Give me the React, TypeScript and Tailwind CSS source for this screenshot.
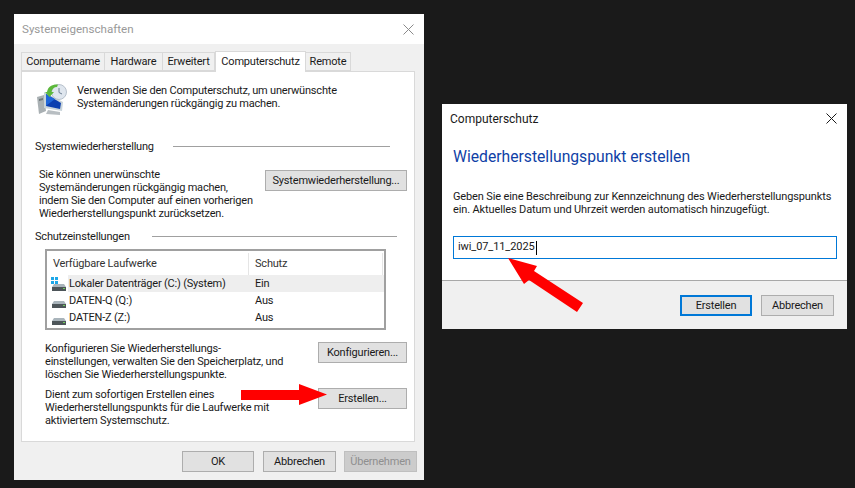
import React from "react";

const font = { fontFamily: "Roboto, 'Noto Sans', sans-serif" };

const Btn = ({ children, className = "" }: { children: React.ReactNode; className?: string }) => (
  <div
    className={`h-[21px] flex items-center justify-center border border-[#adadad] bg-[#e1e1e1] text-[11px] tracking-[-0.2px] leading-none text-[#1a1a1a] ${className}`}
  >
    {children}
  </div>
);

const Tab = ({ label, width, active }: { label: string; width: string; active?: boolean }) =>
  active ? (
    <div className={`${width} h-[21px] -mb-px z-10 pt-px flex items-center justify-center bg-white border border-b-0 border-[#d9d9d9] text-[11px] tracking-[-0.2px] text-[#1a1a1a]`}>
      {label}
    </div>
  ) : (
    <div className={`${width} h-[19px] pt-[2px] flex items-center justify-center bg-[#f0f0f0] border border-[#d9d9d9] border-l-0 first:border-l text-[11px] tracking-[-0.2px] text-[#1a1a1a]`}>
      {label}
    </div>
  );

const CloseIcon = ({ color }: { color: string }) => (
  <svg width="11" height="11" viewBox="0 0 11 11" fill="none" stroke={color} strokeWidth="1">
    <path d="M0.5 0.5 L10.5 10.5 M10.5 0.5 L0.5 10.5" />
  </svg>
);

const RestoreIcon = () => (
  <svg width="31" height="31" viewBox="0 0 31 31">
    <path d="M1 13 L8 11 L10 27 L3 30 Z" fill="#a9b0b3" />
    <path d="M3 15 L7 14 L7 16 L3 17 Z" fill="#6f777a" />
    <path d="M8 8 L27 18 L26 27 L8 24 Z" fill="#c9d4da" />
    <path d="M10 10 L25 19 L24 25 L10 22 Z" fill="#0b3fb0" />
    <path d="M10 10 L19 15 L11 21 L10 22 Z" fill="#1f66d8" />
    <path d="M12 26 L24 28 L24 31 L10 30 Z" fill="#b8bec2" />
    <circle cx="23" cy="8" r="7.5" fill="#dfe6ee" stroke="#a8b4c0" strokeWidth="0.8" />
    <path d="M23 4 V8.5 L26 10" fill="none" stroke="#6d7f92" strokeWidth="1" />
    <path d="M11 8 C12 2 17 0 22 0.5 L21 3 C18 3 16 5 15.5 8 L18 8 L13.5 13 L9 8 Z" fill="#5cb83c" />
  </svg>
);

const DriveIcon = ({ system }: { system?: boolean }) => (
  <svg width="16" height="14" viewBox="0 0 16 14">
    {system && (
      <g fill="#1ea7e8">
        <rect x="0" y="0" width="3" height="3" />
        <rect x="4" y="0" width="3" height="3" />
        <rect x="0" y="4" width="3" height="3" />
        <rect x="4" y="4" width="3" height="3" />
      </g>
    )}
    <path d="M3 7 H13 L15 10 H1 Z" fill="#a9b4bb" />
    <rect x="1" y="10" width="14" height="4" fill="#4d5559" />
    <rect x="12" y="11" width="2" height="1" fill="#6fd05a" />
  </svg>
);

const SectionHead = ({ label, labelWidth, lineRight }: { label: string; labelWidth: string; lineRight: string }) => (
  <div className="flex items-center pl-[13px] h-[13px]">
    <div className={`${labelWidth} text-[11px] tracking-[-0.2px] leading-[13px] text-[#1a1a1a]`}>{label}</div>
    <div className={`flex-1 h-px bg-[#a0a0a0] ${lineRight}`} />
  </div>
);

const Drive = ({ name, status, system, selected }: { name: string; status: string; system?: boolean; selected?: boolean }) => (
  <div className="flex items-center h-[17px] text-[11px] tracking-[-0.2px] text-[#1a1a1a]">
    <div className="w-[21px] pl-[4px] shrink-0">
      <DriveIcon system={system} />
    </div>
    <div className={`flex flex-1 items-center h-full pt-[2px] ${selected ? "bg-[#eeeeee]" : ""}`}>
      <div className="w-[187px] pl-[1px]">{name}</div>
      <div>{status}</div>
    </div>
  </div>
);

export default function App() {
  return (
    <div className="relative w-[855px] h-[488px] overflow-hidden bg-[#1a1a1a]" style={font}>
      <div className="flex items-start gap-[18px] pl-[14px] pt-[14px]">
        {/* Systemeigenschaften */}
        <div className="w-[410px] h-[466px] flex flex-col bg-[#f0f0f0]">
          <div className="h-[30px] bg-white flex items-center justify-between pl-[8px] pr-[10px] text-[11.6px] text-[#999999]">
            <span className="pt-px">Systemeigenschaften</span>
            <CloseIcon color="#8a8a8a" />
          </div>
          <div className="pl-[7px] pr-[9px] pt-[7px]">
            <div className="flex items-end h-[20px] ml-0">
              <Tab label="Computername" width="w-[84px]" />
              <Tab label="Hardware" width="w-[58px]" />
              <Tab label="Erweitert" width="w-[52px]" />
              <Tab label="Computerschutz" width="w-[91px]" active />
              <Tab label="Remote" width="w-[45px]" />
            </div>
            <div className="h-[371px] bg-white border border-[#d9d9d9] flex flex-col">
              <div className="flex pl-[14px] pt-[12px]">
                <RestoreIcon />
                <div className="ml-[10px] text-[11px] tracking-[-0.2px] leading-[13px] text-[#1a1a1a]">
                  Verwenden Sie den Computerschutz, um unerwünschte
                  <br />
                  Systemänderungen rückgängig zu machen.
                </div>
              </div>
              <div className="mt-[25px]">
                <SectionHead label="Systemwiederherstellung" labelWidth="w-[138px]" lineRight="mr-[24px]" />
              </div>
              <div className="flex justify-between pl-[17px] pr-[7px] mt-[17px]">
                <div className="text-[11px] tracking-[-0.2px] leading-[13px] text-[#1a1a1a] mt-[-2px]">
                  Sie können unerwünschte
                  <br />
                  Systemänderungen rückgängig machen,
                  <br />
                  indem Sie den Computer auf einen vorherigen
                  <br />
                  Wiederherstellungspunkt zurücksetzen.
                </div>
                <Btn className="w-[142px]">Systemwiederherstellung...</Btn>
              </div>
              <div className="mt-[10px]">
                <SectionHead label="Schutzeinstellungen" labelWidth="w-[117px]" lineRight="mr-[17px]" />
              </div>
              <div className="ml-[23px] mr-[28px] mt-[6px] h-[81px] border-2 border-[#a0a0a0] flex flex-col">
                <div className="flex h-[24px] pt-[2px] text-[11px] tracking-[-0.2px] text-[#333333] shrink-0">
                  <div className="w-[202px] pl-[6px] flex items-center border-r border-[#e5e5e5]">Verfügbare Laufwerke</div>
                  <div className="flex-1 pl-[6px] flex items-center border-r border-[#e5e5e5] mr-px">Schutz</div>
                </div>
                <Drive name="Lokaler Datenträger (C:) (System)" status="Ein" system selected />
                <Drive name="DATEN-Q (Q:)" status="Aus" />
                <Drive name="DATEN-Z (Z:)" status="Aus" />
              </div>
              <div className="flex justify-between pl-[23px] pr-[7px] mt-[12px]">
                <div className="text-[11px] tracking-[-0.2px] leading-[13px] text-[#1a1a1a]">
                  Konfigurieren Sie Wiederherstellungs-
                  <br />
                  einstellungen, verwalten Sie den Speicherplatz, und
                  <br />
                  löschen Sie Wiederherstellungspunkte.
                </div>
                <Btn className="w-[89px]">Konfigurieren...</Btn>
              </div>
              <div className="flex justify-between pl-[23px] pr-[7px] mt-[7px]">
                <div className="text-[11px] tracking-[-0.2px] leading-[13px] text-[#1a1a1a]">
                  Dient zum sofortigen Erstellen eines
                  <br />
                  Wiederherstellungspunkts für die Laufwerke mit
                  <br />
                  aktiviertem Systemschutz.
                </div>
                <Btn className="w-[89px]">Erstellen...</Btn>
              </div>
            </div>
            <div className="flex justify-end gap-[8px] mt-[9px] mr-[-2px]">
              <Btn className="w-[72px] mr-px">OK</Btn>
              <Btn className="w-[73px]">Abbrechen</Btn>
              <Btn className="w-[73px] !bg-[#cccccc] !border-[#bfbfbf] !text-[#8f8f8f]">Übernehmen</Btn>
            </div>
          </div>
        </div>

        {/* Computerschutz */}
        <div className="mt-[90px] w-[405px] h-[225px] flex flex-col bg-white">
          <div className="h-[29px] flex items-center justify-between pl-[8px] pr-[10px] text-[12px] text-[#1a1a1a]">
            <span>Computerschutz</span>
            <CloseIcon color="#1a1a1a" />
          </div>
          <div className="pl-[11px] pr-[10px] flex-1 flex flex-col">
            <div className="mt-[13px] text-[15.7px] leading-[21px] text-[#0f3fa6]">Wiederherstellungspunkt erstellen</div>
            <div className="mt-[23px] text-[11px] tracking-[-0.13px] leading-[13px] text-[#1a1a1a]">
              Geben Sie eine Beschreibung zur Kennzeichnung des Wiederherstellungspunkts
              <br />
              ein. Aktuelles Datum und Uhrzeit werden automatisch hinzugefügt.
            </div>
            <div className="mt-[20px] h-[23px] border border-[#0078d7] flex items-center pl-[4px] text-[11px] tracking-[-0.1px] text-[#1a1a1a]">
              iwi_07_11_2025
              <span className="inline-block w-px h-[14px] bg-black ml-px" />
            </div>
          </div>
          <div className="h-[49px] shrink-0 bg-[#f0f0f0] border-t border-[#a8a8a8] flex justify-end items-center gap-[9px] pr-[13px]">
            <Btn className="w-[72px] !border-2 !border-[#0078d7]">Erstellen</Btn>
            <Btn className="w-[73px]">Abbrechen</Btn>
          </div>
        </div>
      </div>

      {/* Annotation arrows */}
      <svg className="absolute left-0 top-0 pointer-events-none" width="855" height="488" viewBox="0 0 855 488">
        <polygon points="241,390 299,390 299,384 327,394.5 299,405 299,400 241,400" fill="#ff0000" />
        <polygon points="508,258 537,266 534,271 583,303 577,312 529,280 524,284" fill="#ff0000" />
      </svg>
    </div>
  );
}
